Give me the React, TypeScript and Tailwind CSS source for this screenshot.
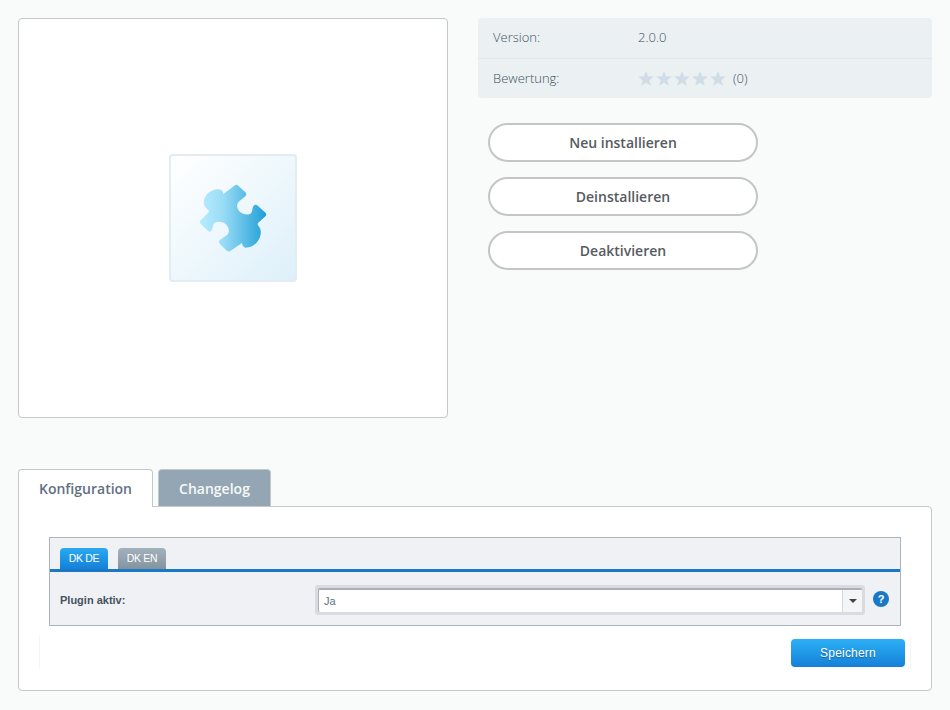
const open = "font-['Open_Sans',sans-serif]";
const arial = "font-['Liberation_Sans',Arial,sans-serif]";

function Puzzle() {
  return (
    <svg width="68" height="68" viewBox="148 130 204 205">
      <defs>
        <linearGradient id="pz" x1="0" y1="0" x2="1" y2="0">
          <stop offset="0" stopColor="#b8ecff" />
          <stop offset="0.35" stopColor="#9adcf6" />
          <stop offset="1" stopColor="#1f9fd6" />
        </linearGradient>
      </defs>
      <path
        fill="url(#pz)"
        d="M254 135 Q260 130 266 135 L288 156 Q292 161 288 166 L268 183 C254 198 268 224 296 222 C306 221 308 212 309 203 Q311 190 322 193 L348 217 Q352 222 348 227 L326 247 Q322 252 328 258 C344 276 326 322 287 322 Q279 320 277 308 L243 331 Q237 336 231 331 L210 310 Q206 304 210 299 L232 284 C246 270 232 243 206 244 C192 245 189 254 188 264 Q182 280 174 271 L152 250 Q148 245 152 240 L176 216 Q180 211 172 205 C148 186 170 146 206 146 Q220 147 221 160 Z"
      />
    </svg>
  );
}

function Star() {
  return (
    <svg width="16" height="15" viewBox="0 0 24 23" className="shrink-0">
      <path fill="#d0dde6" d="M12 0l3.2 8 8.800.6-6.800 5.600 2.200 8.600L12 18l-7.400 4.800 2.200-8.600L0 8.600 8.800 8z" />
    </svg>
  );
}

function Btn({ label }: { label: string }) {
  return (
    <button className={`${open} h-[39px] w-[270px] rounded-[20px] border-2 border-[#c4c6c6] bg-white text-[14px] font-semibold text-[#565b61]`}>
      {label}
    </button>
  );
}

export default function App() {
  return (
    <div className="min-h-[710px] w-[950px] bg-[#f9fafa] pl-[18px] pt-[18px]">
      <div className="flex">
        <div className="flex h-[400px] w-[430px] items-center justify-center rounded-[4px] border border-[#c4c8c8] bg-white">
          <div className="flex h-[128px] w-[128px] items-center justify-center rounded-[4px] border-2 border-[#e3ecf3] bg-gradient-to-br from-white to-[#ddf0fa]">
            <Puzzle />
          </div>
        </div>
        <div className="ml-[30px] w-[454px]">
          <div className={`${open} h-[80px] rounded-[4px] bg-[#ebf0f3] text-[13px] font-light text-[#44525e]`}>
            <div className="flex h-[41px] items-center border-b border-[#e1e7ec] pl-[15px]">
              <span className="w-[145px]">Version:</span>
              <span>2.0.0</span>
            </div>
            <div className="flex h-[39px] items-center pl-[15px]">
              <span className="w-[145px]">Bewertung:</span>
              <span className="flex gap-[2px]">
                <Star /><Star /><Star /><Star /><Star />
              </span>
              <span className="ml-[7px]">(0)</span>
            </div>
          </div>
          <div className="ml-[10px] mt-[25px] flex flex-col gap-[15px]">
            <Btn label="Neu installieren" />
            <Btn label="Deinstallieren" />
            <Btn label="Deaktivieren" />
          </div>
        </div>
      </div>

      <div className="mt-[51px] w-[914px]">
        <div className={`${open} relative z-10 flex h-[38px] items-start text-[14px] font-semibold`}>
          <div className="flex h-[38px] w-[135px] items-center justify-center rounded-t-[4px] border border-b-0 border-[#c4c8c8] bg-white pb-[1px] text-[#5f707f]">
            Konfiguration
          </div>
          <div className="ml-[5px] flex h-[37px] w-[113px] items-center justify-center rounded-t-[4px] border border-b-0 border-[#c4c8c8] bg-[#94a6b3] text-[#f7f9fa]">
            Changelog
          </div>
        </div>
        <div className="-mt-px h-[185px] rounded-b-[4px] rounded-tr-[4px] border border-[#c4c8c8] bg-white pl-[30px] pt-[30px]">
          <div className={`${arial} h-[89px] w-[852px] border border-[#a9b4bd] bg-[#f0f1f4]`}>
            <div className="flex h-[34px] gap-[10px] border-b-[3px] border-[#1a79c6] pl-[10px] pt-[10px] text-[10.5px] tracking-[-0.3px] text-white">
              <div className="flex h-[21px] w-[48px] items-center justify-center rounded-t-[4px] bg-gradient-to-b from-[#2aaaf0] to-[#1680d8]">DK DE</div>
              <div className="flex h-[21px] w-[48px] items-center justify-center rounded-t-[4px] bg-gradient-to-b from-[#a3b1bc] to-[#84949f]">DK EN</div>
            </div>
            <div className="flex h-[53px] items-center pl-[10px] pt-[3px]">
              <span className="w-[255px] text-[11px] font-bold text-[#45535f]">Plugin aktiv:</span>
              <div className="h-[30px] w-[550px] rounded-[3px] bg-[#d8dce0] p-[3px]">
                <div className="flex h-[24px] items-stretch rounded-[2px] border-l border-t-2 border-[#a9b0b6] bg-white">
                  <span className="flex-1 pl-[5px] text-[11px] leading-[23px] text-[#5d7386]">Ja</span>
                  <span className="flex w-[20px] items-center justify-center border-l border-[#d5d8db] bg-[#f4f5f6]">
                    <span className="h-0 w-0 border-x-[4px] border-t-[4px] border-x-transparent border-t-[#3e454c]" />
                  </span>
                </div>
              </div>
              <span className="mb-[2px] ml-[8px] flex h-[16px] w-[16px] items-center justify-center rounded-full bg-[#1a79c6] text-[11px] font-bold text-white">?</span>
            </div>
          </div>
          <div className="mt-[10px] flex h-[33px] w-[862px] items-start justify-between">
            <div className="ml-[-10px] h-[32px] w-px bg-[#f3f4f4]" />
            <div className="flex items-start">
              <button className={`${arial} mt-[3px] h-[28px] w-[114px] rounded-[4px] bg-gradient-to-b from-[#2cb0f6] to-[#1680d8] text-[12px] tracking-[0.2px] text-white [text-shadow:0_1px_1px_rgba(0,0,0,0.3)]`}>
                Speichern
              </button>
              <div className="ml-[5px] h-[33px] w-px bg-[#f3f4f4]" />
            </div>
          </div>
        </div>
      </div>
    </div>
  );
}
